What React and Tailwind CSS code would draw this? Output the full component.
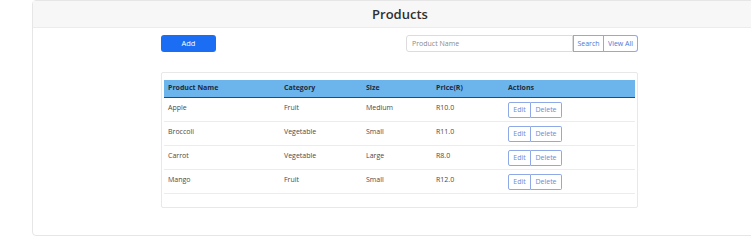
const products = [
  { name: "Apple", category: "Fruit", size: "Medium", price: "R10.0" },
  { name: "Broccoli", category: "Vegetable", size: "Small", price: "R11.0" },
  { name: "Carrot", category: "Vegetable", size: "Large", price: "R8.0" },
  { name: "Mango", category: "Fruit", size: "Small", price: "R12.0" },
];

export default function App() {
  return (
    <div
      className="w-[751px] h-[238px] overflow-hidden bg-white"
      style={{ fontFamily: '"Open Sans", "Noto Sans", sans-serif' }}
    >
      <div className="ml-[32px] w-[736px] h-[236px] border border-[#e6e6e6] rounded-sm">
        {/* header */}
        <div className="h-[27px] bg-[#f7f7f7] border-b border-[#ececec] flex items-center justify-center">
          <h1 className="text-[13px] font-semibold text-[#2f2f2f] leading-none">
            Products
          </h1>
        </div>

        {/* toolbar */}
        <div className="flex items-center mt-[7px] ml-[128px] w-[477px]">
          <button className="w-[55px] h-[17px] bg-[#1b6ef3] text-white text-[7.5px] rounded-[3px] leading-none">
            Add
          </button>
          <div className="flex ml-auto h-[17px]">
            <input
              className="w-[167px] h-full border border-[#dcdcdc] rounded-l-[3px] px-[5px] text-[7px] outline-none placeholder:text-[#8a8a8a]"
              placeholder="Product Name"
            />
            <button className="w-[31px] h-full border border-[#8fa9e6] text-[#4f76d6] text-[7px] leading-none">
              Search
            </button>
            <button className="w-[34px] h-full border border-l-0 border-[#8fa9e6] text-[#4f76d6] text-[7px] rounded-r-[3px] leading-none">
              View All
            </button>
          </div>
        </div>

        {/* table card */}
        <div className="ml-[128px] mt-[20px] w-[477px] h-[136px] border border-[#e8e8e8] rounded-[2px] px-[2px] pt-[7px]">
          <table className="w-full border-collapse text-[7px]">
            <thead>
              <tr className="bg-[#6cb5ec] h-[17px] border-b-[1.5px] border-[#34495e]">
                <th className="text-left font-bold text-[#1d2b44] pl-[4px] w-[120px]">Product Name</th>
                <th className="text-left font-bold text-[#1d2b44] w-[82px]">Category</th>
                <th className="text-left font-bold text-[#1d2b44] w-[70px]">Size</th>
                <th className="text-left font-bold text-[#1d2b44] w-[72px]">Price(R)</th>
                <th className="text-left font-bold text-[#1d2b44]">Actions</th>
              </tr>
            </thead>
            <tbody>
              {products.map((p) => (
                <tr key={p.name} className="h-[24px] border-b border-[#ececec]">
                  <td className="pl-[4px] align-top pt-[5px] text-[#4a4a4a]">{p.name}</td>
                  <td className="align-top pt-[5px] text-[#4a4a4a]">{p.category}</td>
                  <td className="align-top pt-[5px] text-[#4a4a4a]">{p.size}</td>
                  <td className="align-top pt-[5px] text-[#4a4a4a]">{p.price}</td>
                  <td className="align-top pt-[4px]">
                    <div className="flex">
                      <button className="w-[23px] h-[16px] border border-[#8fa9e6] text-[#6a8ad8] text-[7px] rounded-l-[2px] leading-none">
                        Edit
                      </button>
                      <button className="w-[31px] h-[16px] border border-l-0 border-[#8fa9e6] text-[#6a8ad8] text-[7px] rounded-r-[2px] leading-none">
                        Delete
                      </button>
                    </div>
                  </td>
                </tr>
              ))}
            </tbody>
          </table>
        </div>
      </div>
    </div>
  );
}
